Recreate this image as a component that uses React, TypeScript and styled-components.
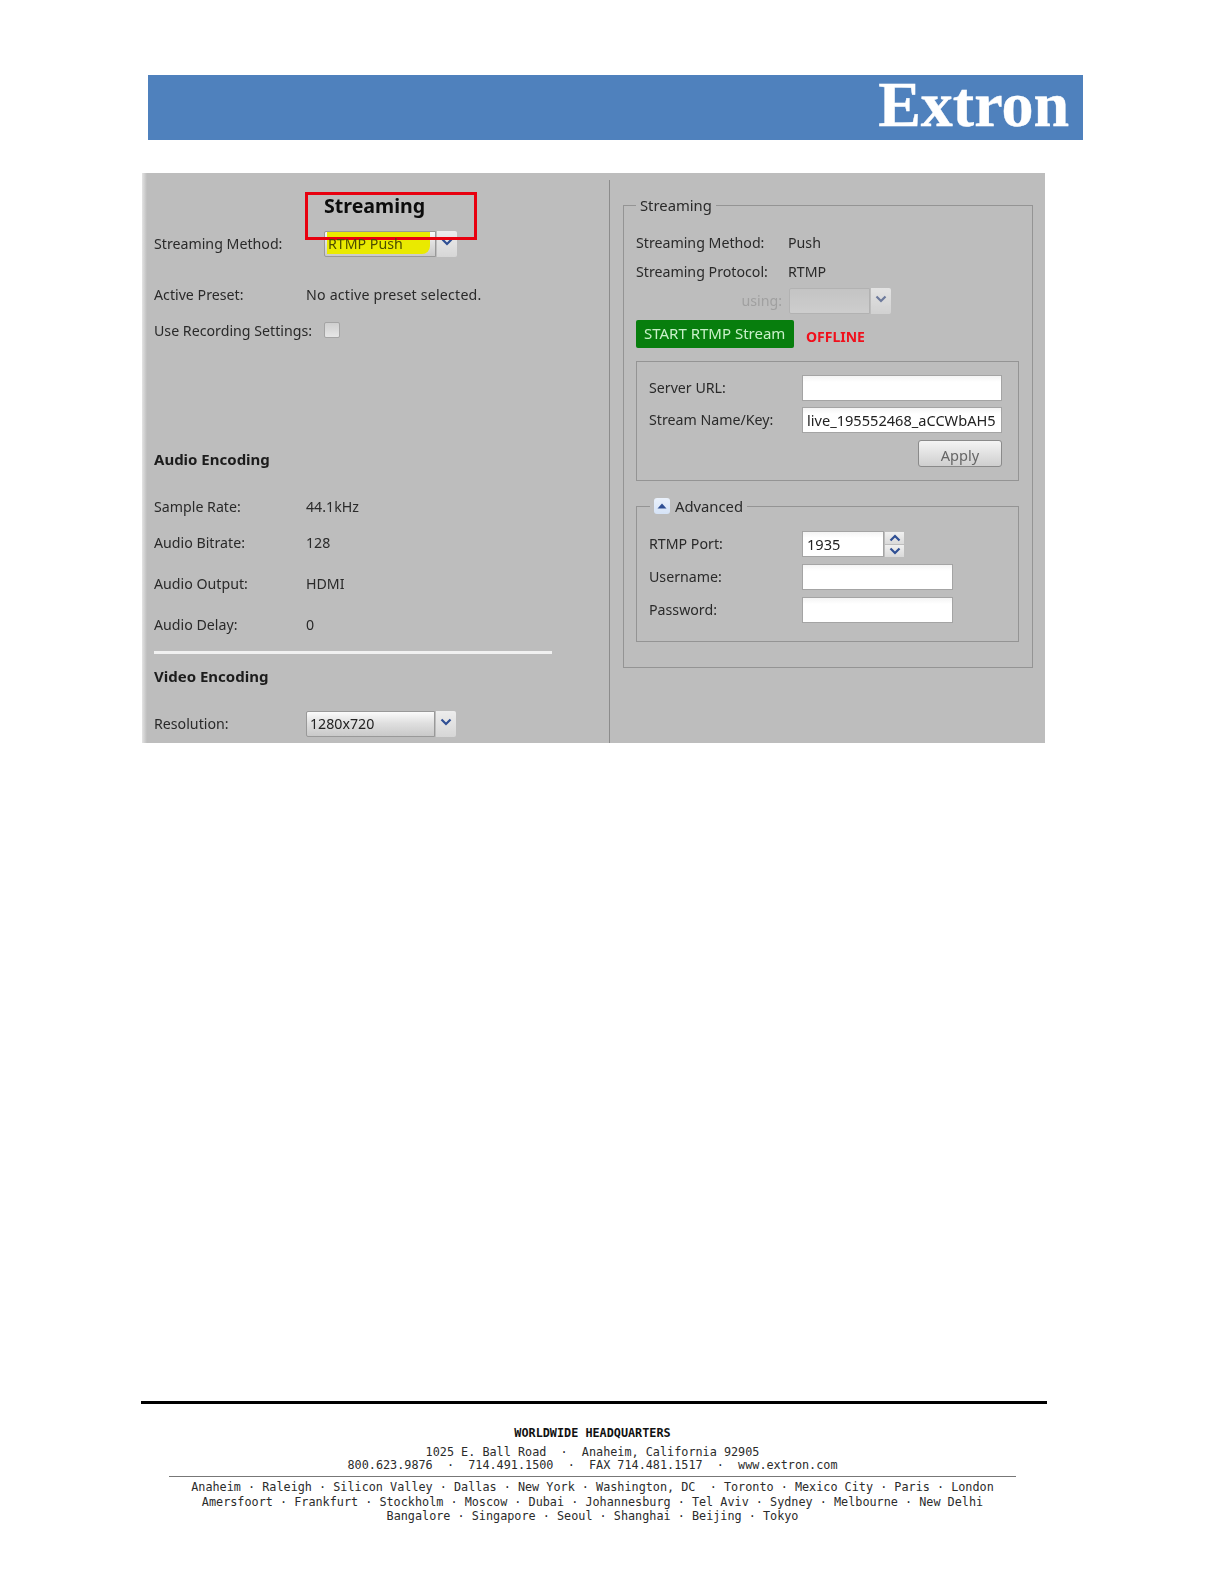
import React from "react";
import styled, { createGlobalStyle } from "styled-components";

const Global = createGlobalStyle`
  html, body { margin: 0; padding: 0; background: #fff; }
  * { box-sizing: border-box; }
`;

const Page = styled.div`
  width: 1224px;
  height: 1584px;
  background: #fff;
  display: flex;
  flex-direction: column;
  overflow: hidden;
  font-family: "Noto Sans", "DejaVu Sans", sans-serif;
  font-size: 14.2px;
  color: #2a2a2a;
`;

const Banner = styled.header`
  margin: 75px 0 0 148px;
  width: 935px;
  height: 65px;
  background: #4f81bd;
  display: flex;
  justify-content: flex-end;
  align-items: flex-end;
  padding: 0 14px 0 0;
`;

const Logo = styled.div`
  font-family: "Liberation Serif", serif;
  font-weight: 700;
  font-size: 64px;
  line-height: 59px;
  height: 65px;
  color: #fff;
  -webkit-text-stroke: 0.4px #fff;
`;

const Panel = styled.section`
  position: relative;
  margin: 33px 0 0 142px;
  width: 903px;
  height: 570px;
  background: #bdbdbd;
  display: flex;
  overflow: hidden;
  filter: blur(0.35px);
`;

const Shade = styled.div`
  position: absolute;
  left: 0;
  top: 0;
  bottom: 0;
  width: 5px;
  background: linear-gradient(90deg, #e4e4e4, #bdbdbd);
`;

const RedBox = styled.div`
  position: absolute;
  left: 163px;
  top: 19px;
  width: 172px;
  height: 48px;
  border: 3px solid #e8000f;
  pointer-events: none;
`;

const LeftColumn = styled.div`
  width: 467px;
  padding-left: 12px;
  display: flex;
  flex-direction: column;
`;

const Divider = styled.div`
  width: 1px;
  flex: none;
  margin-top: 7px;
  background: #8c8c8c;
`;

const RightColumn = styled.div`
  flex: 1;
  padding: 22px 0 0 13px;
`;

const Row = styled.div<{ $top?: number }>`
  display: flex;
  align-items: center;
  height: 26px;
  flex: none;
  margin-top: ${(p) => p.$top ?? 0}px;
`;

const Label = styled.div<{ $w?: number }>`
  width: ${(p) => p.$w ?? 152}px;
  flex: none;
  white-space: nowrap;
  margin-top: -2px;
`;

const Value = styled.div<{ $track?: number }>`
  white-space: nowrap;
  margin-top: -2px;
  letter-spacing: ${(p) => p.$track ?? 0}px;
`;

const Title = styled.div`
  margin: -2px 0 0 170px;
  font-weight: 700;
  font-size: 19.6px;
  color: #0c0c0c;
`;

const SectionTitle = styled.div`
  margin-top: -2px;
  font-weight: 700;
  font-size: 15px;
  color: #1c1c1c;
`;

const WhiteRule = styled.div`
  margin-top: 13px;
  width: 398px;
  height: 3px;
  background: #f1f1f1;
  flex: none;
`;

const Select = styled.div<{ $w: number; $disabled?: boolean }>`
  position: relative;
  display: flex;
  height: 26px;
  width: ${(p) => p.$w + 21}px;
  opacity: ${(p) => (p.$disabled ? 0.8 : 1)};
`;

const SelectField = styled.div<{ $disabled?: boolean }>`
  flex: 1;
  border: 1px solid ${(p) => (p.$disabled ? "#b0b0b0" : "#999")};
  border-radius: 2px 0 0 2px;
  background: ${(p) =>
    p.$disabled
      ? "linear-gradient(180deg, #c6c6c6, #d2d2d2)"
      : "linear-gradient(180deg, #fbfbfb 0%, #e0e0e0 45%, #c9c9c9 100%)"};
  padding-left: 3px;
  line-height: 24px;
  font-size: 14.2px;
  color: #222;
`;

const SelectText = styled.span<{ $marked?: boolean }>`
  position: relative;
  z-index: 1;
  color: ${(p) => (p.$marked ? "#4c4c00" : "#222")};
`;

const SelectButton = styled.div`
  width: 20px;
  margin-left: 1px;
  flex: none;
  border-radius: 0 2px 2px 0;
  background: linear-gradient(180deg, #ededed, #d6d6d6);
  display: flex;
  justify-content: center;
  padding-top: 7px;
`;

const Highlight = styled.div`
  position: absolute;
  left: 3px;
  top: 1px;
  bottom: 3px;
  width: 103px;
  border-radius: 0 0 8px 0;
  background: #eaea00;
`;

const Check = styled.div`
  width: 16px;
  height: 16px;
  margin-top: -2px;
  border: 1px solid #a4a4a4;
  border-radius: 2px;
  background: linear-gradient(180deg, #cfcfcf, #e6e6e6);
`;

const Group = styled.fieldset<{ $h: number; $w: number; $pad: number }>`
  margin: 0;
  min-width: 0;
  width: ${(p) => p.$w}px;
  height: ${(p) => p.$h}px;
  padding: 0 0 0 ${(p) => p.$pad}px;
  border: 1px solid #949494;
`;

const Legend = styled.legend<{ $left: number }>`
  margin-left: ${(p) => p.$left}px;
  padding: 0 4px;
  height: 20px;
  line-height: 20px;
  display: flex;
  align-items: center;
  gap: 5px;
  font-size: 14.8px;
`;

const Toggle = styled.div`
  width: 16px;
  height: 16px;
  border-radius: 3px;
  background: linear-gradient(180deg, #eaf1fb, #d5e3f7);
  display: flex;
  align-items: center;
  justify-content: center;
`;

const Muted = styled.div`
  width: 146px;
  text-align: right;
  margin: -1px 7px 0 0;
  color: #a0a0a0;
`;

const ActionRow = styled.div`
  display: flex;
  align-items: center;
  margin-top: 6px;
  height: 28px;
`;

const StartButton = styled.div`
  width: 158px;
  height: 28px;
  background: #077e0d;
  border-radius: 2px;
  color: #c8f0c8;
  font-size: 15px;
  line-height: 27px;
  padding-left: 8px;
  white-space: nowrap;
`;

const Offline = styled.div`
  margin: 5px 0 0 12px;
  color: #f0101c;
  font-weight: 700;
  font-size: 14px;
`;

const InnerBox = styled.div`
  margin-top: 13px;
  width: 383px;
  height: 120px;
  border: 1px solid #949494;
  padding: 13px 16px 0 12px;
`;

const FormRow = styled.div<{ $top?: number }>`
  display: flex;
  align-items: center;
  height: 26px;
  margin-top: ${(p) => p.$top ?? 0}px;
`;

const Input = styled.div<{ $w: number }>`
  width: ${(p) => p.$w}px;
  height: 26px;
  border: 1px solid #a4a4a4;
  background: linear-gradient(180deg, #f4f4f4, #fff 25%);
  padding-left: 4px;
  line-height: 24px;
  font-size: 14.6px;
  color: #222;
  white-space: nowrap;
  overflow: hidden;
`;

const ApplyRow = styled.div`
  display: flex;
  justify-content: flex-end;
  margin-top: 7px;
`;

const Apply = styled.div`
  width: 84px;
  height: 27px;
  border: 1px solid #8a8a8a;
  border-radius: 3px;
  background: linear-gradient(180deg, #f4f4f4, #cfcfcf);
  text-align: center;
  line-height: 28px;
  color: #666;
  font-size: 14.6px;
`;

const AdvancedWrap = styled.div`
  margin-top: 15px;
`;

const AdvancedFields = styled.div`
  padding-top: 15px;
`;

const Spinner = styled.div`
  width: 19px;
  height: 25px;
  margin-left: 1px;
  display: flex;
  flex-direction: column;
  gap: 1px;
`;

const SpinPart = styled.div`
  flex: 1;
  background: linear-gradient(180deg, #f0f0f0, #dadada);
  display: flex;
  align-items: center;
  justify-content: center;
`;

const Footer = styled.footer`
  margin: 658px 0 0 141px;
  width: 906px;
  border-top: 3px solid #000;
  padding: 22px 31px 0 28px;
  font-family: "DejaVu Sans Mono", "Liberation Mono", monospace;
  font-size: 11.8px;
  color: #2b2b2b;
  text-align: center;
  white-space: pre;
`;

const Headquarters = styled.div`
  font-weight: 700;
  line-height: 14px;
  color: #111;
  margin-bottom: 6px;
`;

const AddressLine = styled.div`
  line-height: 13px;
`;

const ThinRule = styled.div`
  height: 1px;
  background: #777;
  margin: 4px 0 3px;
`;

const CityLine = styled.div`
  line-height: 14.5px;
`;

const Chevron = ({ up, color = "#2f4f94" }: { up?: boolean; color?: string }) => (
  <svg width="12" height="8" viewBox="0 0 12 8">
    <path
      d={up ? "M1.5 6.5 L6 2 L10.5 6.5" : "M1.5 1.5 L6 6 L10.5 1.5"}
      fill="none"
      stroke={color}
      strokeWidth="2.2"
    />
  </svg>
);

export default function App() {
  return (
    <Page>
      <Global />
      <Banner>
        <Logo>Extron</Logo>
      </Banner>
      <Panel>
        <Shade />
        <LeftColumn>
          <Row $top={20}>
            <Title>Streaming</Title>
          </Row>
          <Row $top={12}>
            <Label $w={170}>Streaming Method:</Label>
            <Select $w={112}>
              <Highlight />
              <SelectField>
                <SelectText $marked>RTMP Push</SelectText>
              </SelectField>
              <SelectButton>
                <Chevron />
              </SelectButton>
            </Select>
          </Row>
          <Row $top={25}>
            <Label>Active Preset:</Label>
            <Value $track={0.2}>No active preset selected.</Value>
          </Row>
          <Row $top={10}>
            <Label $w={170}>Use Recording Settings:</Label>
            <Check />
          </Row>
          <Row $top={103}>
            <SectionTitle>Audio Encoding</SectionTitle>
          </Row>
          <Row $top={21}>
            <Label>Sample Rate:</Label>
            <Value>44.1kHz</Value>
          </Row>
          <Row $top={10}>
            <Label>Audio Bitrate:</Label>
            <Value>128</Value>
          </Row>
          <Row $top={15}>
            <Label>Audio Output:</Label>
            <Value>HDMI</Value>
          </Row>
          <Row $top={15}>
            <Label>Audio Delay:</Label>
            <Value>0</Value>
          </Row>
          <WhiteRule />
          <Row $top={10}>
            <SectionTitle>Video Encoding</SectionTitle>
          </Row>
          <Row $top={21}>
            <Label>Resolution:</Label>
            <Select $w={129}>
              <SelectField>
                <SelectText>1280x720</SelectText>
              </SelectField>
              <SelectButton>
                <Chevron />
              </SelectButton>
            </Select>
          </Row>
        </LeftColumn>
        <Divider />
        <RightColumn>
          <Group $w={410} $h={473} $pad={12}>
            <Legend $left={0}>Streaming</Legend>
            <Row $top={15}>
              <Label>Streaming Method:</Label>
              <Value>Push</Value>
            </Row>
            <Row $top={3}>
              <Label>Streaming Protocol:</Label>
              <Value>RTMP</Value>
            </Row>
            <Row $top={3}>
              <Muted>using:</Muted>
              <Select $w={81} $disabled>
                <SelectField $disabled />
                <SelectButton>
                  <Chevron color="#5a6a94" />
                </SelectButton>
              </Select>
            </Row>
            <ActionRow>
              <StartButton>START RTMP Stream</StartButton>
              <Offline>OFFLINE</Offline>
            </ActionRow>
            <InnerBox>
              <FormRow>
                <Label $w={153}>Server URL:</Label>
                <Input $w={200} />
              </FormRow>
              <FormRow $top={6}>
                <Label $w={153}>Stream Name/Key:</Label>
                <Input $w={200}>live_195552468_aCCWbAH5</Input>
              </FormRow>
              <ApplyRow>
                <Apply>Apply</Apply>
              </ApplyRow>
            </InnerBox>
            <AdvancedWrap>
              <Group $w={383} $h={146} $pad={12}>
                <Legend $left={1}>
                  <Toggle>
                    <svg width="10" height="6" viewBox="0 0 10 6">
                      <path d="M5 0.5 L9.5 5.5 L0.5 5.5 Z" fill="#2f4f94" />
                    </svg>
                  </Toggle>
                  Advanced
                </Legend>
                <AdvancedFields>
                  <FormRow>
                    <Label $w={153}>RTMP Port:</Label>
                    <Input $w={82}>1935</Input>
                    <Spinner>
                      <SpinPart>
                        <Chevron up />
                      </SpinPart>
                      <SpinPart>
                        <Chevron />
                      </SpinPart>
                    </Spinner>
                  </FormRow>
                  <FormRow $top={7}>
                    <Label $w={153}>Username:</Label>
                    <Input $w={151} />
                  </FormRow>
                  <FormRow $top={7}>
                    <Label $w={153}>Password:</Label>
                    <Input $w={151} />
                  </FormRow>
                </AdvancedFields>
              </Group>
            </AdvancedWrap>
          </Group>
        </RightColumn>
        <RedBox />
      </Panel>
      <Footer>
        <Headquarters>WORLDWIDE HEADQUARTERS</Headquarters>
        <AddressLine>1025 E. Ball Road  ·  Anaheim, California 92905</AddressLine>
        <AddressLine>800.623.9876  ·  714.491.1500  ·  FAX 714.481.1517  ·  www.extron.com</AddressLine>
        <ThinRule />
        <CityLine>Anaheim · Raleigh · Silicon Valley · Dallas · New York · Washington, DC  · Toronto · Mexico City · Paris · London</CityLine>
        <CityLine>Amersfoort · Frankfurt · Stockholm · Moscow · Dubai · Johannesburg · Tel Aviv · Sydney · Melbourne · New Delhi</CityLine>
        <CityLine>Bangalore · Singapore · Seoul · Shanghai · Beijing · Tokyo</CityLine>
      </Footer>
    </Page>
  );
}
